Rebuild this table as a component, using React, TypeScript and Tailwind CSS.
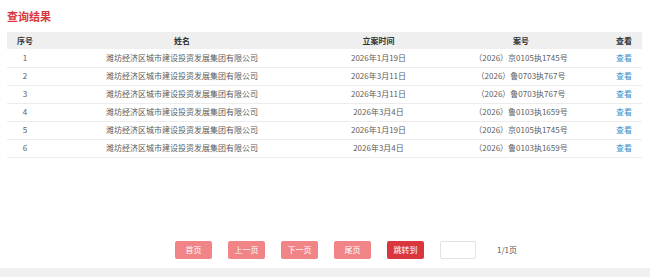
import React from 'react';

const ROWS = [
  { no: 1, name: '潍坊经济区城市建设投资发展集团有限公司', date: '2026年1月19日', code: '（2026）京0105执1745号' },
  { no: 2, name: '潍坊经济区城市建设投资发展集团有限公司', date: '2026年3月11日', code: '（2026）鲁0703执767号' },
  { no: 3, name: '潍坊经济区城市建设投资发展集团有限公司', date: '2026年3月11日', code: '（2026）鲁0703执767号' },
  { no: 4, name: '潍坊经济区城市建设投资发展集团有限公司', date: '2026年3月4日', code: '（2026）鲁0103执1659号' },
  { no: 5, name: '潍坊经济区城市建设投资发展集团有限公司', date: '2026年1月19日', code: '（2026）京0105执1745号' },
  { no: 6, name: '潍坊经济区城市建设投资发展集团有限公司', date: '2026年3月4日', code: '（2026）鲁0103执1659号' },
];

const PAGER = ['首页', '上一页', '下一页', '尾页'];

export default function App() {
  return (
    <div
      className="w-[650px] h-[277px] bg-white flex flex-col text-[#5c5c5c]"
      style={{ fontFamily: '"Noto Sans CJK SC", "Noto Sans", sans-serif' }}
    >
      <div className="px-[7px] pt-[9px]">
        <h1 className="text-[11px] leading-[14px] font-bold text-[#d9363e]">查询结果</h1>
        <table className="mt-[9px] w-[635px] table-fixed border-collapse text-[8px]">
          <colgroup>
            <col className="w-[36px]" />
            <col className="w-[278px]" />
            <col className="w-[115px]" />
            <col className="w-[170px]" />
            <col className="w-[36px]" />
          </colgroup>
          <thead>
            <tr className="h-[17px] bg-[#efefef] text-[#333]">
              <th className="font-bold">序号</th>
              <th className="font-bold">姓名</th>
              <th className="font-bold">立案时间</th>
              <th className="font-bold">案号</th>
              <th className="font-bold">查看</th>
            </tr>
          </thead>
          <tbody>
            {ROWS.map(r => (
              <tr key={r.no} className="h-[18px] border-b border-[#ececec] text-center">
                <td>{r.no}</td>
                <td>{r.name}</td>
                <td>{r.date}</td>
                <td>{r.code}</td>
                <td className="text-[#3d8ec9]">查看</td>
              </tr>
            ))}
          </tbody>
        </table>
      </div>

      <div className="flex-1" />

      <div className="flex items-center pl-[175px] mb-[9px] text-[8px]">
        <div className="flex gap-[16px]">
          {PAGER.map(t => (
            <button key={t} className="w-[37px] h-[18px] rounded-[2px] bg-[#f08486] text-white">
              {t}
            </button>
          ))}
          <button className="w-[37px] h-[18px] rounded-[2px] bg-[#d9363e] text-white">跳转到</button>
          <input className="w-[36px] h-[18px] rounded-[2px] border border-[#e2e2e2] bg-white" />
        </div>
        <span className="ml-[21px] text-[#555]">1/1页</span>
      </div>

      <div className="h-[9px] bg-[#f0f0f0]" />
    </div>
  );
}
